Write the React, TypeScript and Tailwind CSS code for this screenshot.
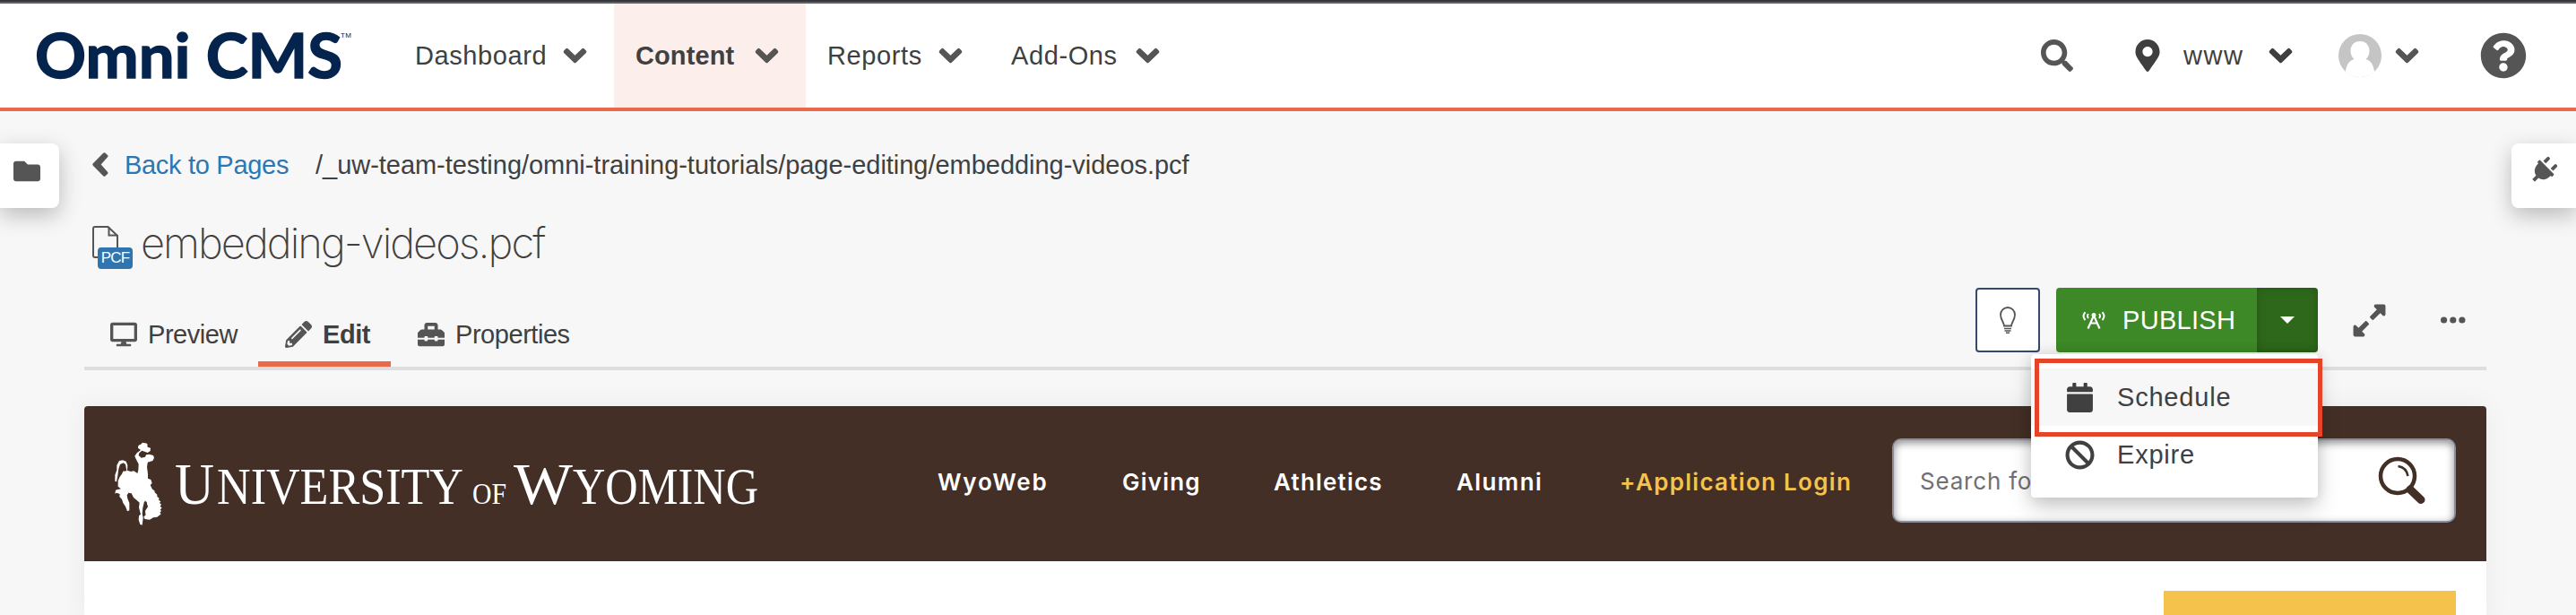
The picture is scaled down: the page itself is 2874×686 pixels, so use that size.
import type { ReactNode } from "react"
import {
  FaBan,
  FaCalendar,
  FaDesktop,
  FaExpandAlt,
  FaFolder,
  FaMapMarkerAlt,
  FaPencilAlt,
  FaPlug,
  FaQuestionCircle,
  FaSearch,
  FaToolbox,
} from "react-icons/fa"

const NAV_ITEMS = [
  { label: "Dashboard", box: "w-[246px]", active: false },
  { label: "Content", box: "w-[214px]", active: true },
  { label: "Reports", box: "w-[205px]", active: false },
  { label: "Add-Ons", box: "w-[220px]", active: false },
]

const SITE_LINKS = [
  { label: "WyoWeb", box: "w-[206px] tracking-[1.8px]", color: "text-white" },
  { label: "Giving", box: "w-[169px] tracking-[1.2px]", color: "text-white" },
  { label: "Athletics", box: "w-[204px] tracking-[1.2px]", color: "text-white" },
  { label: "Alumni", box: "w-[182px] tracking-[1.4px]", color: "text-white" },
  { label: "+Application Login", box: "w-[304px] tracking-[1.3px]", color: "text-[#f5c34c]" },
]

const TABS = [
  { label: "Preview", icon: <FaDesktop size={30} />, box: "w-[194px] pl-[29px]", active: false },
  { label: "Edit", icon: <FaPencilAlt size={30} />, box: "w-[148px] pl-[30px]", active: true },
  { label: "Properties", icon: <FaToolbox size={30} />, box: "w-[230px] pl-[30px]", active: false },
]

function Chevron({ color = "#555555" }: { color?: string }) {
  return (
    <svg width="27" height="18" viewBox="0 0 28 18" fill={color} className="shrink-0">
      <path d="M1.2 3.3 3.2 1.2Q4.6-.1 6.1 1.2L14 8.8 21.900 1.200Q23.400-.1 24.800 1.200L26.800 3.300Q28 4.800 26.600 6.200L15.300 17Q14 18.100 12.700 17L1.400 6.200Q0 4.800 1.200 3.300Z" />
    </svg>
  )
}

function OmniLogo() {
  return (
    <svg width="360" height="74" viewBox="0 -4 360 74" className="ml-[38px] shrink-0 overflow-visible">
      <text
        x="1"
        y="57"
        textLength="343"
        lengthAdjust="spacingAndGlyphs"
        fill="#05244d"
        stroke="#05244d"
        strokeWidth="1.5"
        className="font-['Lato',sans-serif] text-[68px] font-bold"
      >
        Omni CMS
      </text>
      <text x="342" y="12" textLength="12" fill="#05244d" className="font-['Liberation_Sans',sans-serif] text-[8px]">
        TM
      </text>
    </svg>
  )
}

function Avatar() {
  return (
    <svg width="48" height="48" viewBox="0 0 48 48" className="shrink-0">
      <circle cx="24" cy="24" r="24" fill="#c5c5c5" />
      <path
        d="M24 8c-6.500 0-10.500 4.700-10.500 10.800 0 4 1.500 7 4 9.200-5.500 1.600-8.300 5.500-9.700 14A24 24 0 0 0 24 48a24 24 0 0 0 16.200-6c-1.400-8.500-4.200-12.400-9.700-14 2.500-2.200 4-5.200 4-9.200C34.500 12.700 30.500 8 24 8Z"
        fill="#fff"
      />
    </svg>
  )
}

function TopBar() {
  return (
    <header className="flex h-[124px] items-stretch border-b-4 border-[#ea694a] bg-white">
      <div className="flex w-[439px] items-start pt-[26px]">
        <OmniLogo />
      </div>
      {NAV_ITEMS.map((item) => (
        <div
          key={item.label}
          className={`flex items-center justify-between pt-1 pr-[30px] pl-6 text-[29px] leading-9 text-[#404040] ${item.box} ${
            item.active ? "bg-[#fceeeb] font-bold" : ""
          }`}
        >
          <span className={item.active ? "tracking-[0.1px]" : "tracking-[0.6px]"}>{item.label}</span>
          <Chevron />
        </div>
      ))}
      <div className="ml-auto flex items-center pt-1 text-[#555555]">
        <FaSearch size={36} />
        <FaMapMarkerAlt size={36} className="ml-[65px] text-[#3f3f3f]" />
        <span className="ml-[22px] w-[95px] text-[29px] leading-9 tracking-[1.5px] text-[#404040]">www</span>
        <Chevron color="#3f3f3f" />
        <div className="ml-[51px]">
          <Avatar />
        </div>
        <div className="ml-[15px]">
          <Chevron />
        </div>
        <FaQuestionCircle size={52} className="mr-[55px] ml-[68px]" />
      </div>
    </header>
  )
}

function SideTab({ className, children }: { className: string; children: ReactNode }) {
  return (
    <div
      className={`absolute top-[160px] flex h-[72px] bg-white text-[#555555] shadow-[0_8px_24px_rgba(0,0,0,0.25)] ${className}`}
    >
      {children}
    </div>
  )
}

function PcfFileIcon() {
  return (
    <div className="relative h-[50px] w-[46px] shrink-0">
      <svg width="30" height="37" viewBox="0 0 30 37" fill="none" stroke="#555555" strokeWidth="2">
        <path d="M6 35H3Q1 35 1 33V3Q1 1 3 1H17.500L28 11V24" />
        <path d="M18.500 1.500V10.500H27.500" />
      </svg>
      <span className="absolute top-[24px] left-[6px] flex h-6 w-[39px] items-center justify-center rounded-[4px] bg-[#2f76b0] text-[17px] leading-6 tracking-[-0.8px] text-white">
        PCF
      </span>
    </div>
  )
}

function PublishMenu() {
  return (
    <div className="absolute top-[74px] right-0 z-10 h-40 w-80 rounded-[4px] bg-white py-4 text-[29px] tracking-[0.8px] text-[#404040] shadow-[0_12px_24px_rgba(0,0,0,0.18),0_0_16px_rgba(0,0,0,0.12)]">
      <div className="flex h-16 items-center bg-[#f7f7f7] pl-[38px]">
        <FaCalendar size={33} />
        <span className="ml-[25px] leading-9">Schedule</span>
      </div>
      <div className="flex h-16 items-center pl-[38px]">
        <FaBan size={33} />
        <span className="ml-[25px] leading-9">Expire</span>
      </div>
      <div className="absolute top-[5px] left-1 h-[87px] w-[321px] border-[5px] border-[#e54429]" />
    </div>
  )
}

function Actions() {
  return (
    <div className="flex h-[72px] items-center self-start text-[#555555]">
      <div className="flex size-[72px] items-center justify-center rounded-[4px] border-2 border-[#34496d] bg-white">
        <svg width="18" height="30" viewBox="0 0 18 30" fill="none" stroke="#555555" strokeWidth="1.800">
          <path d="M5 21.500C4.500 17 1 14.500 1 9a8 8 0 0 1 16 0c0 5.500-3.500 8-4 12.500Z" />
          <path d="M5 24.500h8M5.500 27h7M7 29.200h4" strokeWidth="1.500" />
        </svg>
      </div>
      <div className="relative ml-[18px] flex h-[72px]">
        <div className="flex w-56 items-center rounded-l-[4px] bg-[#3d8827] pl-[29px] text-white">
          <svg width="26" height="20" viewBox="0 0 26 20" fill="none" stroke="#fff" strokeWidth="2">
            <path d="M3.500 1.200Q-.5 5.500 3.500 10M22.500 1.200Q26.500 5.500 22.500 10M7 3.200Q5 5.500 7 8M19 3.200Q21 5.500 19 8" />
            <path d="M6.500 19.500 13 5l6.500 14.500M9.500 13.500h7" strokeWidth="2.200" />
            <circle cx="13" cy="4.500" r="2.500" fill="#fff" stroke="none" />
          </svg>
          <span className="ml-[19px] text-[29px] leading-9 tracking-[0.3px]">PUBLISH</span>
        </div>
        <div className="flex w-[68px] items-center justify-center rounded-r-[4px] bg-[#2e681b] shadow-[inset_0_0_8px_rgba(0,60,0,0.35)]">
          <span className="border-x-8 border-t-8 border-x-transparent border-t-white" />
        </div>
        <PublishMenu />
      </div>
      <FaExpandAlt size={41} className="ml-[37px]" />
      <svg width="28" height="8" viewBox="0 0 28 8" fill="#555555" className="mr-[23px] ml-[59px]">
        <circle cx="3.600" cy="4" r="3.600" />
        <circle cx="13.800" cy="4" r="3.600" />
        <circle cx="23.900" cy="4" r="3.600" />
      </svg>
    </div>
  )
}

function BuckingHorse() {
  return (
    <svg width="56" height="94" viewBox="52 38 168 282" fill="#fff" className="ml-[33px] shrink-0">
      <path d="M133 58Q132 48 141 47L148 40 158 42 164 44 165 55 175 58 174 68 165 74 155 70 146 67 137 75 135 83 144 91 157 88 160 81 170 79 184 83 187 91 182 101 172 104 165 108 163 122 166 145 166 160 176 164 180 176 174 182 181 196 188 201 189 207 197 214 197 221 204 226 202 232 209 237 205 242 211 247 207 253 213 259 207 264 211 269 206 274 210 279 204 284 197 289 184 291 172 298 156 296 152 289 159 281 156 270 165 256 162 238 154 238 149 258 147 278 150 292 147 316 140 314 135 298 136 285 142 280 136 258 138 241 128 232 118 224 111 210 101 208 96 216 98 228 104 242 104 267 97 270 91 254 83 242 79 230 71 221 72 212 61 208 56 211 58 199 65 197 76 195 66 187 66 168 72 154 79 145 83 136 95 135 91 113 84 108 73 113 68 128 65 151 61 171 56 170 56 148 62 132 62 116 70 101 82 99 93 103 98 116 97 133 109 137 119 135 131 143 134 132 135 112 125 93 122 85 129 75 142 65Z" />
      <path d="M157 235 165 256M156 275 155 238M168 105 173 160" stroke="#432f26" strokeWidth="3" fill="none" />
    </svg>
  )
}

function WyomingWordmark() {
  return (
    <svg
      width="660"
      height="80"
      viewBox="192 505 660 80"
      fill="#fff"
      className="mt-[11px] ml-[9px] shrink-0 font-['Liberation_Serif',serif]"
    >
      <text x="195" y="562" textLength="44" lengthAdjust="spacingAndGlyphs" className="text-[65px]">
        U
      </text>
      <text x="242" y="562" textLength="275" lengthAdjust="spacingAndGlyphs" className="text-[56px]">
        NIVERSITY
      </text>
      <text x="527" y="562" textLength="38" lengthAdjust="spacingAndGlyphs" className="text-[34px]">
        OF
      </text>
      <text x="573" y="562" textLength="66" lengthAdjust="spacingAndGlyphs" className="text-[65px]">
        W
      </text>
      <text x="639" y="562" textLength="207" lengthAdjust="spacingAndGlyphs" className="text-[56px]">
        YOMING
      </text>
    </svg>
  )
}

function SitePreview() {
  return (
    <section className="mt-10 h-[240px] overflow-hidden rounded-t-[4px] bg-white shadow-[0_0_30px_rgba(0,0,0,0.06)]">
      <div className="flex h-[173px] items-center bg-[#432f26]">
        <BuckingHorse />
        <WyomingWordmark />
        <div className="mr-[34px] mb-[7px] ml-auto flex items-center">
          <nav className="flex pt-[3px] font-['Inter',sans-serif] text-[26px] leading-8 font-semibold">
            {SITE_LINKS.map((link) => (
              <span key={link.label} className={`${link.box} ${link.color} whitespace-nowrap`}>
                {link.label}
              </span>
            ))}
          </nav>
          <div className="flex h-[94px] w-[629px] items-center justify-between rounded-[10px] border-2 border-[#8b8e9a] bg-white pr-[31px] pl-[29px] shadow-[inset_0_3px_10px_rgba(0,0,0,0.45)]">
            <span className="font-['Inter',sans-serif] text-[26px] tracking-[0.8px] text-[#707074]">Search for</span>
            <svg width="54" height="54" viewBox="0 0 54 54" fill="none" stroke="#432f26">
              <circle cx="22" cy="22" r="19" strokeWidth="4.500" />
              <path d="M22.500 11Q32 12.500 33.500 22" strokeWidth="2.500" />
              <path d="M36 37 48 48.500" strokeWidth="9" strokeLinecap="round" />
            </svg>
          </div>
        </div>
      </div>
      <div className="mt-[33px] mr-[34px] ml-auto h-[34px] w-[326px] bg-[#f5c34c]" />
    </section>
  )
}

export default function App() {
  return (
    <div className="relative h-[686px] w-full overflow-hidden bg-[#f7f7f7] font-['Liberation_Sans',Arial,sans-serif] text-[#404040]">
      <div className="absolute inset-x-0 top-0 h-1 border-b-2 border-[#5f6165] bg-[#36373d]" />
      <TopBar />
      <SideTab className="left-0 w-[66px] rounded-r-[8px] pt-4 pl-[15px]">
        <FaFolder size={30} />
      </SideTab>
      <SideTab className="right-0 w-[72px] rounded-l-[8px] pt-[15px] pl-[20px]">
        <FaPlug size={31} className="rotate-45" />
      </SideTab>

      <main className="mr-[100px] ml-[94px]">
        <div className="flex h-[106px] items-start pt-[42px] text-[29px] leading-9">
          <svg width="18" height="27" viewBox="0 0 18 27" fill="#555555" className="mt-[4px] ml-[9px]">
            <path d="M12.200.8Q13.400-.3 14.600.8L17 3Q18 4.100 17 5.300L9.700 13.500 17 21.700Q18 22.900 17 24L14.600 26.200Q13.400 27.300 12.200 26.200L.8 14.700Q-.2 13.500.8 12.300Z" />
          </svg>
          <span className="ml-[18px] w-[213px] tracking-[-0.3px] text-[#2f76b0]">Back to Pages</span>
          <span className="tracking-[-0.03px] whitespace-nowrap">
            /_uw-team-testing/omni-training-tutorials/page-editing/embedding-videos.pcf
          </span>
        </div>
        <div className="flex h-[91px] items-start pt-[22px] pl-[9px]">
          <PcfFileIcon />
          <h1 className="-mt-[6px] ml-[8px] font-['Inter',sans-serif] text-[47px] leading-[50px] font-extralight tracking-[-1.950px]">
            embedding-videos.pcf
          </h1>
        </div>
        <div className="flex h-[92px] items-end justify-between border-b-4 border-[#dedede]">
          <div className="flex h-full items-end">
            {TABS.map((tab) => (
              <div
                key={tab.label}
                className={`flex h-[66px] items-center border-b-[6px] text-[29px] leading-9 tracking-[-0.450px] ${tab.box} ${
                  tab.active ? "border-[#ea694a] font-bold" : "border-transparent"
                }`}
              >
                <span className="text-[#555555]">{tab.icon}</span>
                <span className="ml-3">{tab.label}</span>
              </div>
            ))}
          </div>
          <Actions />
        </div>
        <SitePreview />
      </main>
    </div>
  )
}
